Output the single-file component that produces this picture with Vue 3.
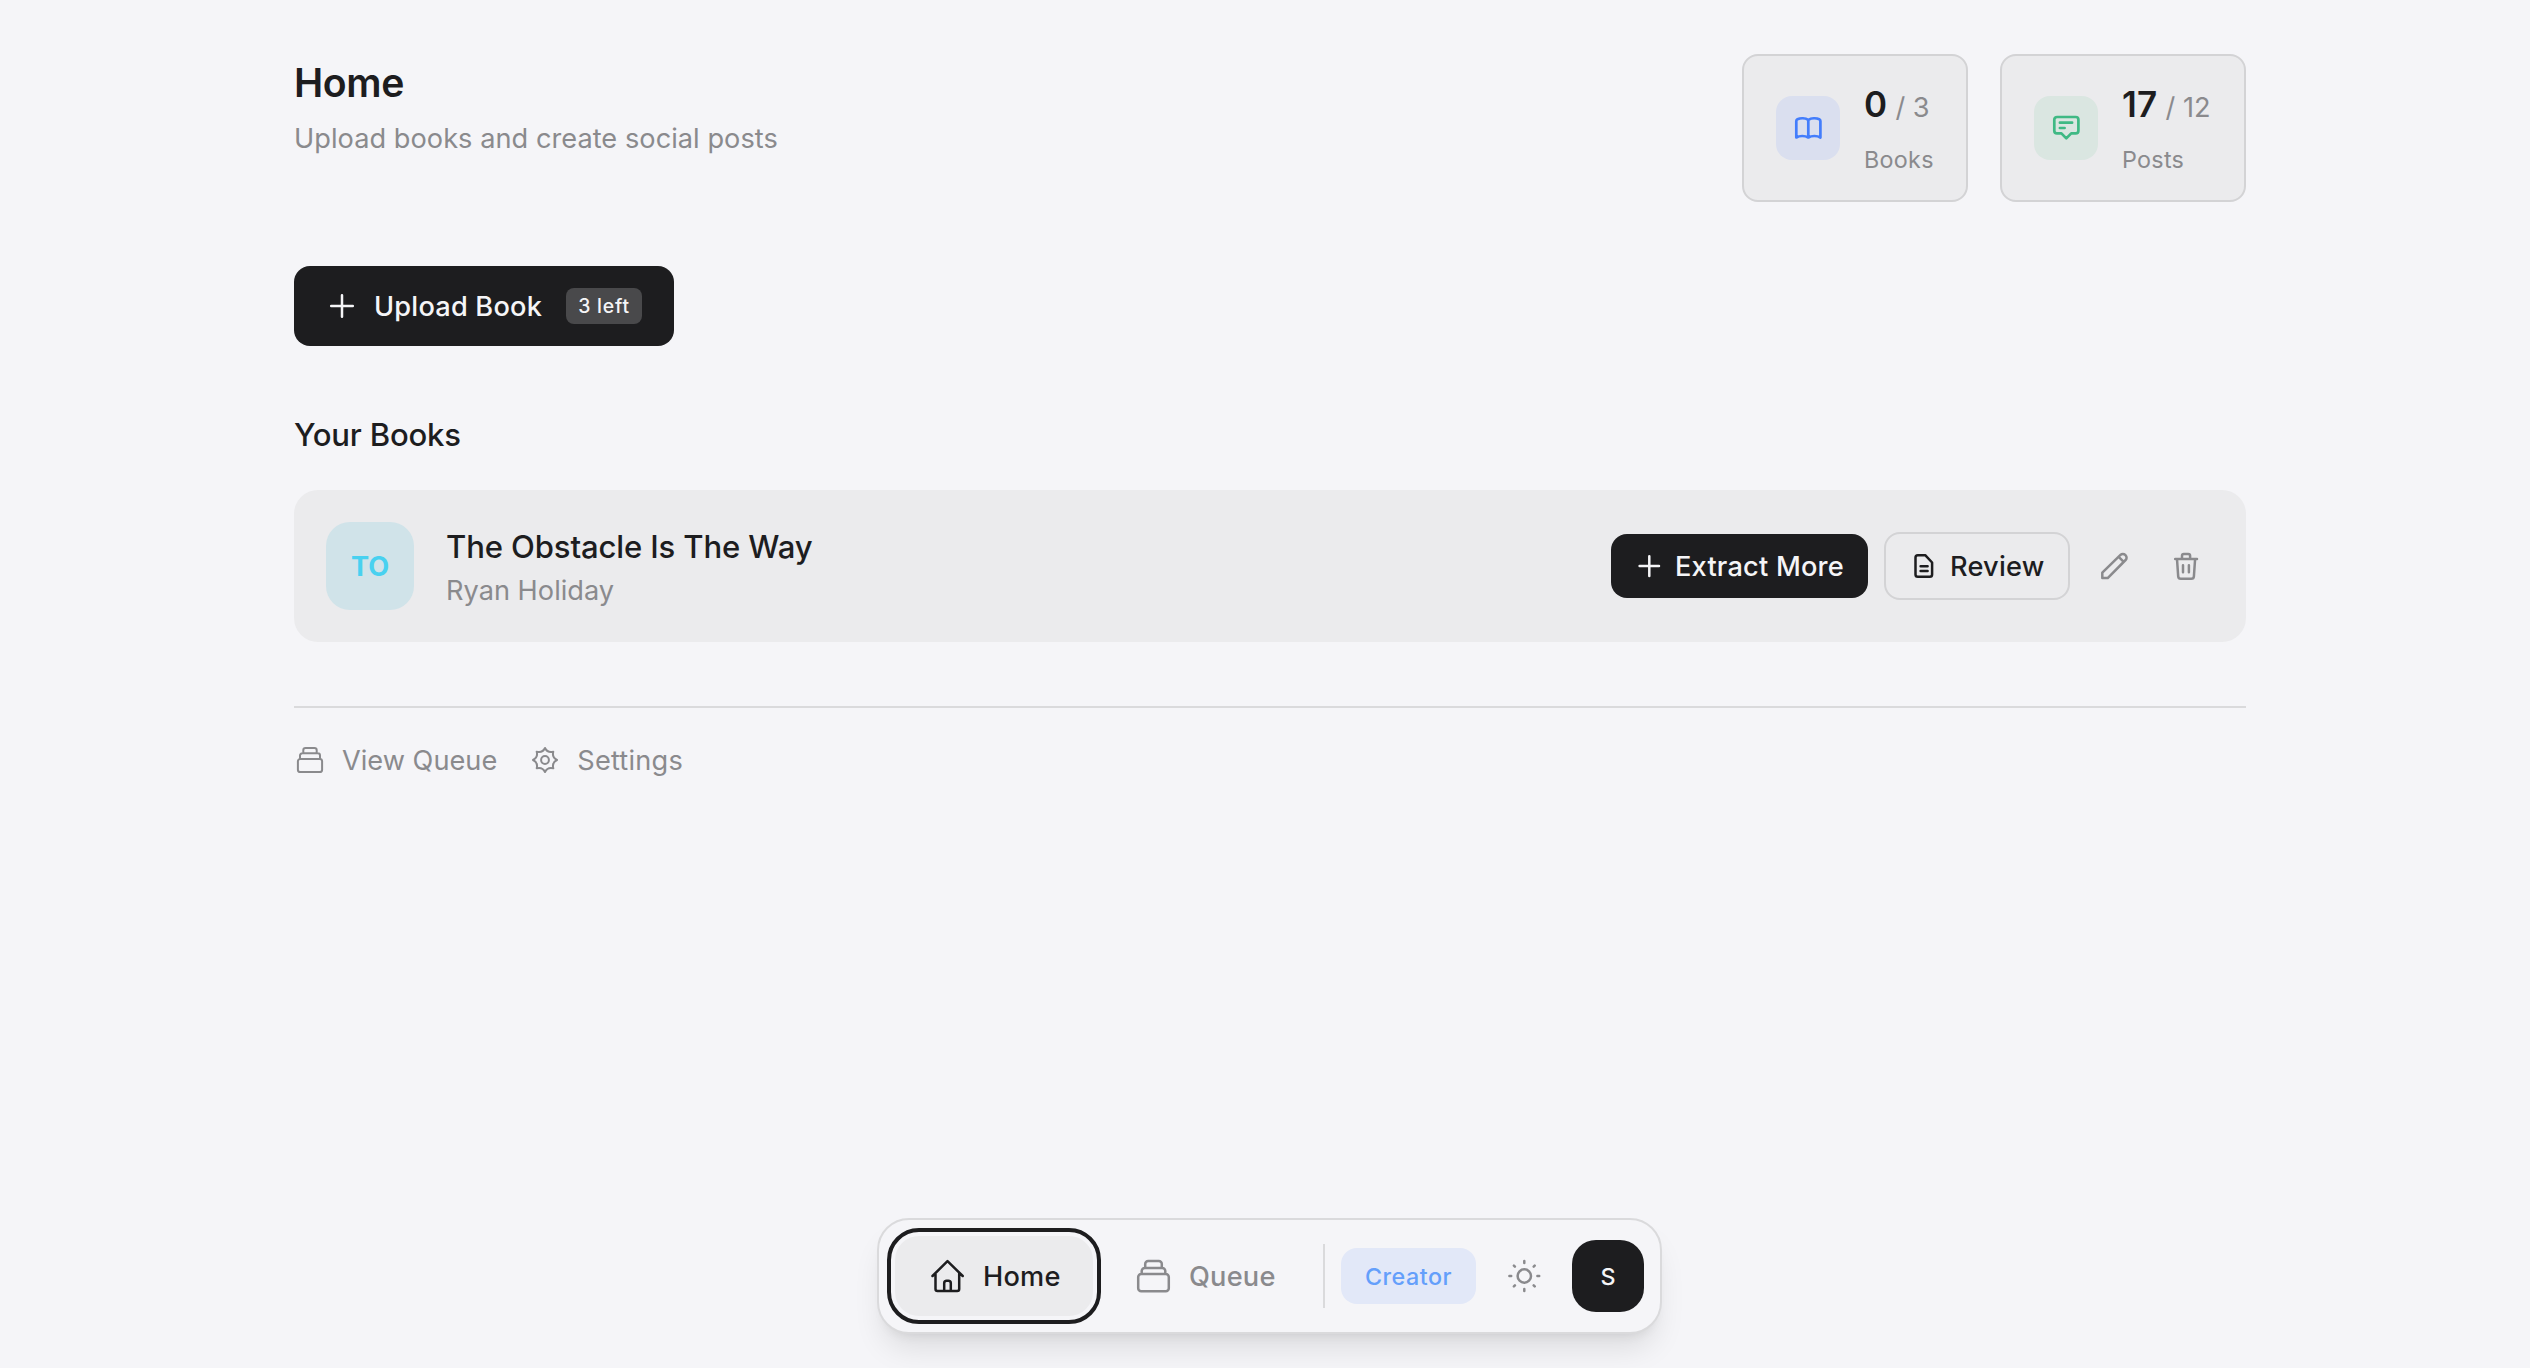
<script setup>
const stats = [
  { id: 'books', value: '0', total: '3', label: 'Books' },
  { id: 'posts', value: '17', total: '12', label: 'Posts' },
]
</script>

<template>
  <div class="page">
    <main class="content">
      <header class="top">
        <div class="heading">
          <h1>Home</h1>
          <p>Upload books and create social posts</p>
        </div>
        <div class="stats">
          <div v-for="s in stats" :key="s.id" class="stat" :class="s.id">
            <div class="stat-icon">
              <svg v-if="s.id === 'books'" viewBox="0 0 32 32" width="32" height="32">
                <path d="M16.300 7.800C13.500 6.200 8.500 6 5.400 7.200Q4.300 7.700 4.300 8.900V25.500C7.500 23.500 13 23.500 16.300 25.500 19.600 23.500 25.200 23.500 28.400 25.500V8.900Q28.400 7.700 27.300 7.200C24.200 6 19.100 6.200 16.300 7.800ZM16.300 7.800V25.500" />
              </svg>
              <svg v-else viewBox="0 0 32 32" width="32" height="32">
                <path d="M7 5h18.700a2.700 2.700 0 0 1 2.700 2.700v11a2.700 2.700 0 0 1-2.700 2.700H21.200L16.300 26.400 11.400 21.400H7a2.700 2.700 0 0 1-2.700-2.700V7.700A2.700 2.700 0 0 1 7 5ZM9.900 10.700h12.200M9.900 16h4.700" />
              </svg>
            </div>
            <div class="stat-text">
              <div class="figures"><span class="value">{{ s.value }}</span><span class="total">/ {{ s.total }}</span></div>
              <div class="label">{{ s.label }}</div>
            </div>
          </div>
        </div>
      </header>

      <button class="upload">
        <svg viewBox="0 0 32 32" width="32" height="32"><path d="M16 5.200v21.600M5.200 16h21.600" /></svg>
        <span class="t t-upload">Upload Book</span>
        <span class="left">3 left</span>
      </button>

      <h2>Your Books</h2>
      <article class="book">
        <div class="cover"><span class="t">TO</span></div>
        <div class="meta">
          <div class="title">The Obstacle Is The Way</div>
          <div class="author">Ryan Holiday</div>
        </div>
        <div class="actions">
          <button class="extract">
            <svg viewBox="0 0 28 28" width="28" height="28"><path d="M14.300 4.200v19.800M4.600 14.100h19.400" /></svg>
            <span class="t">Extract More</span>
          </button>
          <button class="review">
            <svg viewBox="0 0 28 28" width="28" height="28"><path d="M7.800 3.200H15.200L22.100 10.500V22.500a2.300 2.300 0 0 1-2.300 2.300H7.800a2.300 2.300 0 0 1-2.300-2.300V5.500a2.300 2.300 0 0 1 2.300-2.300ZM10.600 14.300h7M10.600 18.900h7" /></svg>
            <span class="t">Review</span>
          </button>
          <button class="ghost" aria-label="Edit">
            <svg viewBox="0 0 32 32" width="32" height="32"><path d="M4.300 28.100V22.600L22.500 4.900a3.300 3.300 0 0 1 4.700 0l.4.400a3.300 3.300 0 0 1 0 4.700L9.700 28.100ZM20.700 6.800l5 5" /></svg>
          </button>
          <button class="ghost" aria-label="Delete">
            <svg viewBox="0 0 32 32" width="32" height="32"><path d="M5.200 9h21.800M7 9l1.200 17.400a2.600 2.600 0 0 0 2.600 2.400h10.500a2.600 2.600 0 0 0 2.600-2.400L25.100 9M12 9V5.700a1.800 1.800 0 0 1 1.800-1.800h4.500a1.800 1.800 0 0 1 1.800 1.800V9M13 15.300v7M18.900 15.300v7" /></svg>
          </button>
        </div>
      </article>

      <nav class="links">
        <a class="link-queue">
          <svg viewBox="0 0 32 32" width="32" height="32"><path d="M6.300 14.900h19.400a2.400 2.400 0 0 1 2.400 2.400v8.400a2.400 2.400 0 0 1-2.400 2.400H6.300a2.400 2.400 0 0 1-2.400-2.400v-8.400a2.400 2.400 0 0 1 2.400-2.400ZM6 15v-3.400a2.300 2.300 0 0 1 2.300-2.300h15.400a2.300 2.300 0 0 1 2.300 2.300V15M9.300 9.300V6.200a2.300 2.300 0 0 1 2.300-2.300h8.800a2.300 2.300 0 0 1 2.300 2.300v3.100" /></svg>
          <span class="t">View Queue</span>
        </a>
        <a class="link-settings">
          <svg viewBox="0 0 32 32" width="32" height="32"><path d="M16 4Q18.600 9.300 24.300 7.700 22.700 13.400 28 16 22.700 18.600 24.300 24.300 18.600 22.700 16 28 13.400 22.700 7.700 24.300 9.300 18.600 4 16 9.300 13.400 7.700 7.700 13.400 9.300 16 4Z" /><circle cx="16" cy="16" r="3.900" /></svg>
          <span class="t t-settings">Settings</span>
        </a>
      </nav>
    </main>

    <nav class="dock">
      <a class="tab active">
        <svg viewBox="0 0 40 40" width="40" height="40"><path d="M5.500 20 20.500 5.100 35.700 20M8.500 17.300V33a2 2 0 0 0 2 2h19.700a2 2 0 0 0 2-2V17.300M17.200 35v-7.800a2.500 2.500 0 0 1 2.500-2.500h1.600a2.500 2.500 0 0 1 2.500 2.500V35" /></svg>
        <span class="t">Home</span>
      </a>
      <a class="tab queue">
        <svg viewBox="0 0 40 40" width="40" height="40"><path d="M8.200 18h24.600a3 3 0 0 1 3 3v11.300a3 3 0 0 1-3 3H8.200a3 3 0 0 1-3-3V21a3 3 0 0 1 3-3ZM8.700 18v-3a3 3 0 0 1 3-3h17.600a3 3 0 0 1 3 3v3M12.200 12V8.100a3 3 0 0 1 3-3h10.600a3 3 0 0 1 3 3V12" /></svg>
        <span class="t">Queue</span>
      </a>
      <i class="sep"></i>
      <span class="plan"><span class="t">Creator</span></span>
      <button class="theme" aria-label="Theme">
        <svg viewBox="0 0 40 40" width="40" height="40"><circle cx="20.300" cy="20" r="6.700" /><path d="M20.300 5.100v1.800M20.300 33.100v1.800M5.400 20h1.800M33.400 20h1.800M9.900 9.600l1 1M29.700 29.400l1 1M9.900 30.400l1-1M29.700 10.600l1-1" /></svg>
      </button>
      <span class="avatar"><span class="t">S</span></span>
    </nav>
  </div>
</template>

<style>
html, body { margin: 0; background: #f5f5f8; }
</style>

<style scoped>
* { box-sizing: border-box; }
.page {
  position: relative;
  height: 1368px;
  overflow: hidden;
  background: #f5f5f8;
  color: #1d1d1f;
  font-family: Inter, "Liberation Sans", sans-serif;
  white-space: nowrap;
}
svg { display: block; flex: none; fill: none; stroke: currentColor; stroke-width: 2.5; stroke-linecap: round; stroke-linejoin: round; }
button { border: 0; padding: 0; background: none; color: inherit; font: inherit; }
h1, h2, p { margin: 0; }
.t { padding-top: 1px; }
.content { width: 1952px; margin: 0 289px 0 294px; padding-top: 54px; }
.top { display: flex; justify-content: space-between; height: 148px; }
h1 { margin-top: 2px; font-size: 39.2px; line-height: 53px; font-weight: 600; letter-spacing: -0.4px; }
p { margin-top: 9px; font-size: 27.2px; line-height: 41px; letter-spacing: 0.03px; color: #8a8a8d; }
.stats { display: flex; gap: 32px; }
.stat { display: flex; align-items: center; gap: 24px; height: 148px; padding: 0 32px; border: 2px solid #d3d3d5; border-radius: 16px; background: #ebebed; }
.books { width: 226px; }
.posts { width: 246px; }
.stat-icon { display: grid; place-items: center; flex: none; width: 64px; height: 64px; border-radius: 16px; }
.stat-icon svg { stroke-width: 2.7; }
.books .stat-icon { background: #dadfef; color: #437dfc; }
.posts .stat-icon { background: #dae6e1; color: #3fb984; }
.stat-text { padding-top: 4px; }
.figures { display: flex; align-items: baseline; gap: 8px; height: 56px; line-height: 56px; }
.value { font-size: 35px; font-weight: 600; letter-spacing: 0.3px; }
.total { font-size: 27.2px; color: #8a8a8d; }
.label { height: 52px; line-height: 55px; font-size: 23.3px; letter-spacing: 0.3px; color: #8a8a8d; }
.upload { display: flex; align-items: center; width: 380px; height: 80px; margin-top: 64px; padding-left: 32px; border-radius: 16px; background: #1d1d1f; color: #f5f5f7; }
.t-upload { margin-left: 16px; font-size: 27.2px; font-weight: 500; letter-spacing: 0.2px; }
.left { display: grid; place-items: center; width: 76px; height: 36px; margin-left: auto; margin-right: 32px; border-radius: 8px; background: #49494b; font-size: 19.4px; font-weight: 500; letter-spacing: 0.8px; }
h2 { margin-top: 64px; height: 50px; line-height: 50px; font-size: 31.1px; font-weight: 500; letter-spacing: -0.2px; }
.book { display: flex; align-items: center; height: 152px; margin-top: 30px; padding: 0 32px; border-radius: 24px; background: #ebebed; }
.cover { display: grid; place-items: center; width: 88px; height: 88px; border-radius: 24px; background: #d0e3e9; color: #48d1f0; font-size: 27.2px; font-weight: 700; }
.meta { margin-left: 32px; padding-top: 2px; }
.title { height: 46px; line-height: 46px; font-size: 31.1px; font-weight: 500; letter-spacing: -0.14px; }
.author { height: 40px; line-height: 41px; font-size: 27.2px; color: #8a8a8d; }
.actions { display: flex; align-items: center; margin-left: auto; }
.extract, .review { display: flex; align-items: center; gap: 12px; padding-left: 24px; border-radius: 16px; font-size: 27.2px; font-weight: 500; letter-spacing: 0.2px; }
.extract { width: 257px; height: 64px; background: #1d1d1f; color: #f5f5f7; }
.review { width: 186px; height: 68px; margin-left: 16px; border: 2px solid #d3d3d5; }
.ghost { display: grid; place-items: center; width: 56px; height: 56px; margin-left: 16px; color: #8a8a8d; }
.links { display: flex; margin-top: 64px; padding-top: 32px; border-top: 2px solid #dadadc; color: #8a8a8d; font-size: 27.2px; line-height: 39px; }
.links a { display: flex; align-items: center; gap: 16px; }
.link-settings { margin-left: 32px; }
.t-settings { letter-spacing: 0.2px; }
.links svg { stroke-width: 2; }
.dock { position: absolute; left: 877px; top: 1218px; display: flex; align-items: center; width: 785px; height: 116px; padding: 0 16px; border: 2px solid #dadadc; border-radius: 32px; background: #f5f5f8; box-shadow: 0 20px 30px -6px rgba(0,0,0,.1), 0 8px 12px -8px rgba(0,0,0,.1); }
.tab { display: flex; align-items: center; gap: 16px; height: 80px; padding-left: 32px; border-radius: 24px; color: #8a8a8d; font-size: 27.2px; font-weight: 500; letter-spacing: 0.2px; }
.active { width: 198px; background: #ebebed; color: #1d1d1f; outline: 4px solid #1d1d1f; outline-offset: 4px; }
.queue { width: 206px; margin: 0 16px 0 8px; }
.sep { width: 2px; height: 64px; background: #dadadc; }
.plan { display: grid; place-items: center; width: 135px; height: 56px; margin-left: 16px; border-radius: 16px; background: #e2e8f8; color: #649ffb; font-size: 23.3px; font-weight: 500; letter-spacing: 0.5px; }
.theme { margin-left: 28px; color: #8a8a8d; }
.avatar { display: grid; place-items: center; width: 72px; height: 72px; margin-left: auto; border-radius: 24px; background: #1d1d1f; color: #f5f5f7; font-size: 23.3px; font-weight: 500; }
</style>
